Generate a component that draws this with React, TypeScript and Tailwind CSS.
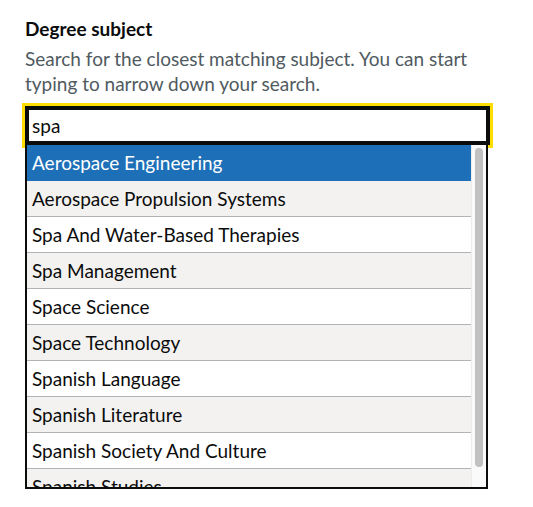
import React from "react";

const options = [
  "Aerospace Engineering",
  "Aerospace Propulsion Systems",
  "Spa And Water-Based Therapies",
  "Spa Management",
  "Space Science",
  "Space Technology",
  "Spanish Language",
  "Spanish Literature",
  "Spanish Society And Culture",
  "Spanish Studies",
];

export default function App() {
  return (
    <div
      className="min-h-[507px] w-[533px] bg-white pl-[25px] pt-[16px] text-[#0b0c0c]"
      style={{ fontFamily: 'Lato, "Noto Sans", Arial, sans-serif' }}
    >
      <div className="text-[19px] font-bold leading-[25px] mb-[5px]">Degree subject</div>
      <div className="text-[19px] leading-[25px] text-[#505a5f] w-[465px] mb-[10px]">
        Search for the closest matching subject. You can start typing to narrow down your search.
      </div>
      <div className="w-[465px]">
        <div className="h-[39px] border-[4px] border-[#0b0c0c] outline outline-[3px] outline-[#ffdd00] bg-white pl-[3px] text-[19px] leading-[31px]">
          spa
        </div>
        <div className="relative z-10 flex w-[463px] h-[344px] border-x-2 border-b-2 border-[#0b0c0c] bg-white overflow-hidden">
          <div className="flex-1 overflow-hidden">
            {options.map((o, i) => (
              <div
                key={o}
                className={
                  i === 0
                    ? "px-[5px] py-[5px] text-[19px] leading-[25px] whitespace-nowrap border-b border-[#1d70b8] bg-[#1d70b8] text-white"
                    : i % 2 === 1
                    ? "px-[5px] py-[5px] text-[19px] leading-[25px] whitespace-nowrap border-b border-[#b1b4b6] bg-[#f3f2f1]"
                    : "px-[5px] py-[5px] text-[19px] leading-[25px] whitespace-nowrap border-b border-[#b1b4b6] bg-white"
                }
              >
                {o}
              </div>
            ))}
          </div>
          <div className="w-[15px] shrink-0 bg-[#fafafa] border-l border-[#ececec] pt-[3px] pl-[3px]">
            <div className="w-[8px] h-[319px] rounded-full bg-[#c1c1c1]" />
          </div>
        </div>
      </div>
    </div>
  );
}
